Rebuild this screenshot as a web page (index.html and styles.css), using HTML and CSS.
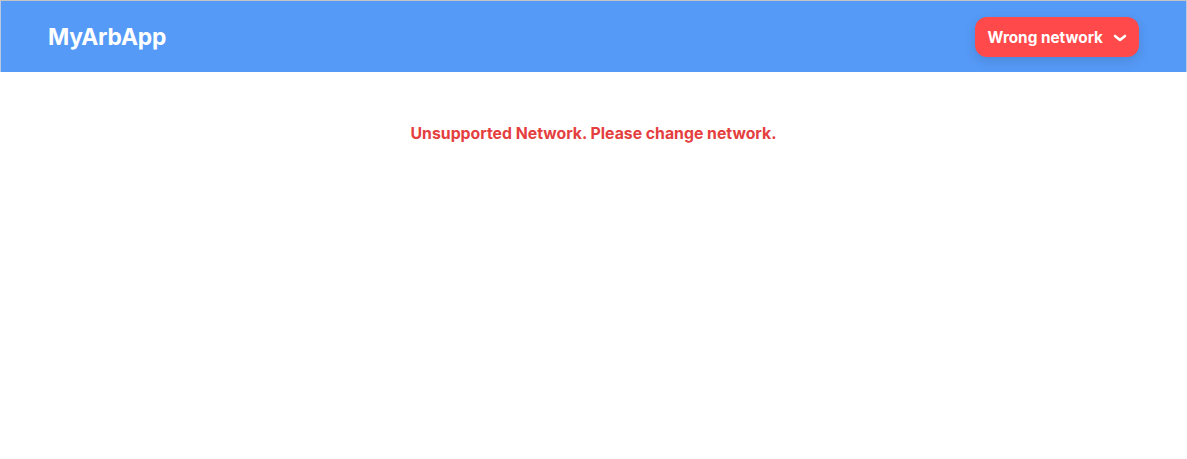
FILE: index.html
```html
<!DOCTYPE html>
<html>
<head>
<meta charset="utf-8">
<link rel="stylesheet" href="styles.css">
</head>
<body>
<div class="frame">
  <header class="header">
    <div class="logo">MyArbApp</div>
    <button class="wrong">
      <span>Wrong network</span>
      <svg class="chev" width="14" height="8" viewBox="0 0 14 8"><path d="M2 2 L7 6 L12 2" fill="none" stroke="#fff" stroke-width="2.6" stroke-linecap="round" stroke-linejoin="round"/></svg>
    </button>
  </header>
  <main class="main">
    <p class="msg">Unsupported Network. Please change network.</p>
  </main>
</div>
</body>
</html>
```
FILE: styles.css
```css
html, body { margin: 0; padding: 0; background: #fff; }
body { font-family: Inter, "Noto Sans", sans-serif; }
.frame { border-top: 1px solid #c4c4c4; min-height: 458px; }
.header {
  height: 71px;
  background: #559af7;
  border-left: 1px solid #b9c9de;
  border-right: 1px solid #b9c9de;
  display: flex;
  align-items: center;
  justify-content: space-between;
  padding: 0 47px 0 47px;
}
.logo { color: #fff; font-weight: 700; font-size: 22.8px; letter-spacing: -0.2px; }
.wrong {
  display: flex;
  align-items: center;
  gap: 10px;
  height: 40px;
  padding: 0 12px 0 13px;
  background: #ff494a;
  color: #fff;
  border: none;
  border-radius: 12px;
  font-family: Inter, sans-serif;
  font-weight: 700;
  font-size: 15.3px;
  box-shadow: 0 4px 12px rgba(0,0,0,0.12);
  margin-top: 1px;
}
.chev { display: block; margin-top: 1px; }
.main { display: flex; justify-content: center; padding-top: 52px; }
.msg { margin: 0; color: #e53e3e; font-weight: 700; font-size: 15.8px; }
```
